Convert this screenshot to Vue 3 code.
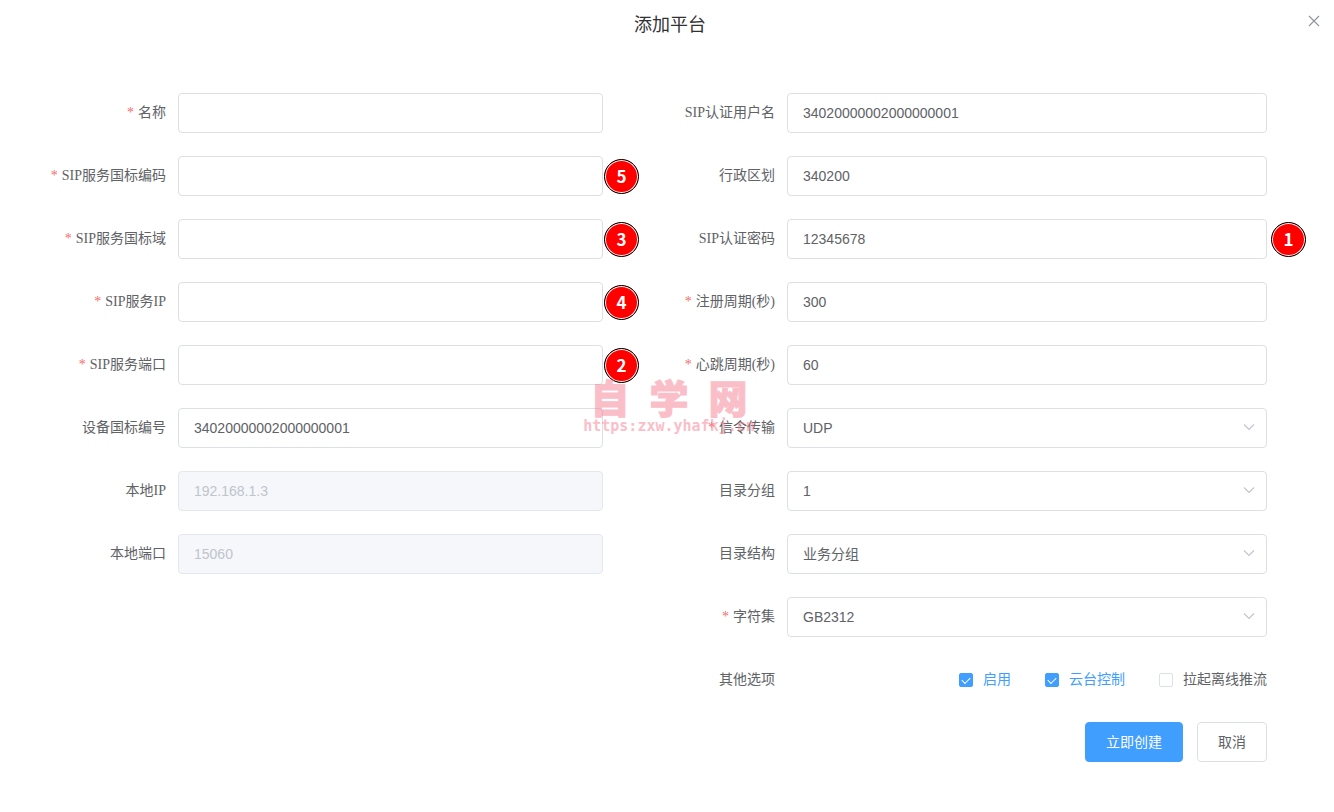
<script setup>
import { reactive } from 'vue'

const columns = reactive([
  {
    side: 'left',
    fields: [
      { id: 'name', label: '名称', required: true, value: '' },
      { id: 'server-id', label: 'SIP服务国标编码', required: true, value: '', step: 5 },
      { id: 'server-domain', label: 'SIP服务国标域', required: true, value: '', step: 3 },
      { id: 'server-ip', label: 'SIP服务IP', required: true, value: '', step: 4 },
      { id: 'server-port', label: 'SIP服务端口', required: true, value: '', step: 2 },
      { id: 'device-id', label: '设备国标编号', value: '34020000002000000001' },
      { id: 'local-ip', label: '本地IP', value: '192.168.1.3', disabled: true },
      { id: 'local-port', label: '本地端口', value: '15060', disabled: true },
    ],
  },
  {
    side: 'right',
    fields: [
      { id: 'username', label: 'SIP认证用户名', value: '34020000002000000001' },
      { id: 'region', label: '行政区划', value: '340200' },
      { id: 'password', label: 'SIP认证密码', value: '12345678', step: 1 },
      { id: 'register', label: '注册周期(秒)', required: true, value: '300' },
      { id: 'keepalive', label: '心跳周期(秒)', required: true, value: '60' },
      { id: 'transport', label: '信令传输', required: true, value: 'UDP', options: ['UDP', 'TCP'] },
      { id: 'group', label: '目录分组', value: '1', options: ['1', '2', '4', '8'] },
      { id: 'structure', label: '目录结构', value: '业务分组', options: ['业务分组', '行政区划'] },
      { id: 'charset', label: '字符集', required: true, value: 'GB2312', options: ['GB2312', 'UTF-8'] },
    ],
  },
])

const toggles = reactive([
  { id: 'enable', label: '启用', on: true },
  { id: 'ptz', label: '云台控制', on: true },
  { id: 'offline', label: '拉起离线推流', on: false },
])
</script>

<template>
  <main class="dialog">
    <header class="header">
      <h1 class="title">添加平台</h1>
      <button class="close" type="button" aria-label="关闭">
        <svg viewBox="0 0 12 12" width="12" height="12"><path d="M1 1L11 11M11 1L1 11" /></svg>
      </button>
    </header>

    <form class="form" @submit.prevent>
      <div v-for="col in columns" :key="col.side" class="column" :class="col.side">
        <div v-for="f in col.fields" :key="f.id" class="row">
          <label class="label" :for="f.id"><span v-if="f.required" class="star">*</span>{{ f.label }}</label>
          <div class="control">
            <template v-if="f.options">
              <select :id="f.id" v-model="f.value" class="field">
                <option v-for="o in f.options" :key="o">{{ o }}</option>
              </select>
              <svg class="chevron" viewBox="0 0 12 8" width="12" height="8"><path d="M1 1.5L6 6.5L11 1.5" /></svg>
            </template>
            <input v-else :id="f.id" v-model="f.value" class="field" type="text" :disabled="f.disabled" />
            <span v-if="f.step" class="badge">{{ f.step }}</span>
          </div>
        </div>

        <template v-if="col.side === 'right'">
          <div class="row" role="group" aria-labelledby="other">
            <span id="other" class="label">其他选项</span>
            <div class="toggles">
              <label v-for="t in toggles" :key="t.id" class="toggle" :class="{ on: t.on }">
                <input v-model="t.on" class="check" type="checkbox" />{{ t.label }}
              </label>
            </div>
          </div>
          <div class="actions">
            <button class="btn primary" type="submit">立即创建</button>
            <button class="btn" type="button">取消</button>
          </div>
        </template>
      </div>
    </form>

    <div class="watermark">
      <div class="mark-name"><span>自</span><span>学</span><span>网</span></div>
      <div class="mark-url">https:zxw.yhafkj.cn</div>
    </div>
  </main>
</template>

<style>
body {
  background: #fff;
}
</style>

<style scoped>
.dialog {
  position: relative;
  color: #606266;
  font-family: "Liberation Serif", "Noto Sans CJK SC", serif;
  font-size: 14px;
}
.header {
  display: grid;
  grid-template-columns: 1fr auto 1fr;
  padding: 13px 14px 0 20px;
}
.title {
  grid-column: 2;
  margin: 0;
  color: #303133;
  font-size: 18px;
  font-weight: 400;
  line-height: 24px;
}
.close {
  display: flex;
  justify-self: end;
  align-self: start;
  padding: 2px 0;
  border: 0;
  background: none;
  cursor: pointer;
}
.close svg {
  fill: none;
  stroke: #909399;
  stroke-width: 1.1;
}
.form {
  display: grid;
  grid-template-columns: 565fr 620fr;
  column-gap: 44px;
  padding: 56px 67px 48px 38px;
}
.column {
  display: flex;
  flex-direction: column;
  gap: 23px;
}
.row {
  display: grid;
  grid-template-columns: 140px 1fr;
  height: 40px;
}
.label {
  padding-right: 12px;
  line-height: 40px;
  text-align: right;
  white-space: nowrap;
}
.star {
  margin-right: 4px;
  color: #f56c6c;
}
.control {
  position: relative;
}
.field {
  box-sizing: border-box;
  display: block;
  width: 100%;
  height: 40px;
  margin: 0;
  padding: 0 15px;
  border: 1px solid #dcdfe6;
  border-radius: 4px;
  outline: none;
  appearance: none;
  background: #fff;
  color: #606266;
  font-family: "Liberation Sans", "Noto Sans CJK SC", sans-serif;
  font-size: 14px;
}
.field:disabled {
  border-color: #e4e7ed;
  background: #f5f7fa;
  color: #c0c4cc;
}
.chevron {
  position: absolute;
  top: 15px;
  right: 12px;
  fill: none;
  stroke: #c0c4cc;
  stroke-width: 1.1;
  pointer-events: none;
}
.badge {
  position: absolute;
  top: 3px;
  left: calc(100% + 1px);
  box-sizing: border-box;
  width: 35px;
  height: 35px;
  border: 1px solid #000;
  border-radius: 50%;
  background: #f00;
  box-shadow: inset 0 0 0 1px #fff;
  color: #fff;
  font: 700 17px/32px "Noto Sans CJK SC", sans-serif;
  text-align: center;
}
.right .badge {
  left: calc(100% + 4px);
}
.toggles {
  display: flex;
  justify-content: flex-end;
  gap: 34px;
}
.toggle {
  display: flex;
  align-items: center;
  gap: 10px;
  line-height: 40px;
  white-space: nowrap;
}
.toggle.on {
  color: #409eff;
}
.check {
  box-sizing: border-box;
  display: grid;
  place-items: center;
  width: 14px;
  height: 14px;
  margin: 0;
  border: 1px solid #dcdfe6;
  border-radius: 2px;
  appearance: none;
  background: #fff;
}
.check:checked {
  border-color: #409eff;
  background: #409eff;
}
.check:checked::after {
  content: "";
  box-sizing: border-box;
  width: 8px;
  height: 5px;
  border: solid #fff;
  border-width: 0 0 1px 1px;
  transform: translateY(-1px) rotate(-45deg);
}
.actions {
  display: flex;
  justify-content: flex-end;
  gap: 14px;
  margin-top: -1px;
}
.btn {
  height: 40px;
  padding: 0 20px 2px;
  border: 1px solid #dcdfe6;
  border-radius: 4px;
  background: #fff;
  color: #606266;
  font-family: "Liberation Sans", "Noto Sans CJK SC", sans-serif;
  font-size: 14px;
  cursor: pointer;
}
.btn.primary {
  border-color: #409eff;
  background: #409eff;
  color: #fff;
}
.watermark {
  position: absolute;
  top: 376px;
  left: 50%;
  display: flex;
  flex-direction: column;
  align-items: center;
  gap: 2px;
  padding-left: 4px;
  color: #f77f93;
  opacity: 0.5;
  pointer-events: none;
  transform: translateX(-50%);
}
.mark-name {
  display: flex;
  gap: 20px;
  font: 900 39px/40px "Noto Sans CJK SC", sans-serif;
  -webkit-text-stroke: 1px #f77f93;
}
.mark-url {
  font: 700 15px/16px "DejaVu Sans Mono", monospace;
}
</style>
